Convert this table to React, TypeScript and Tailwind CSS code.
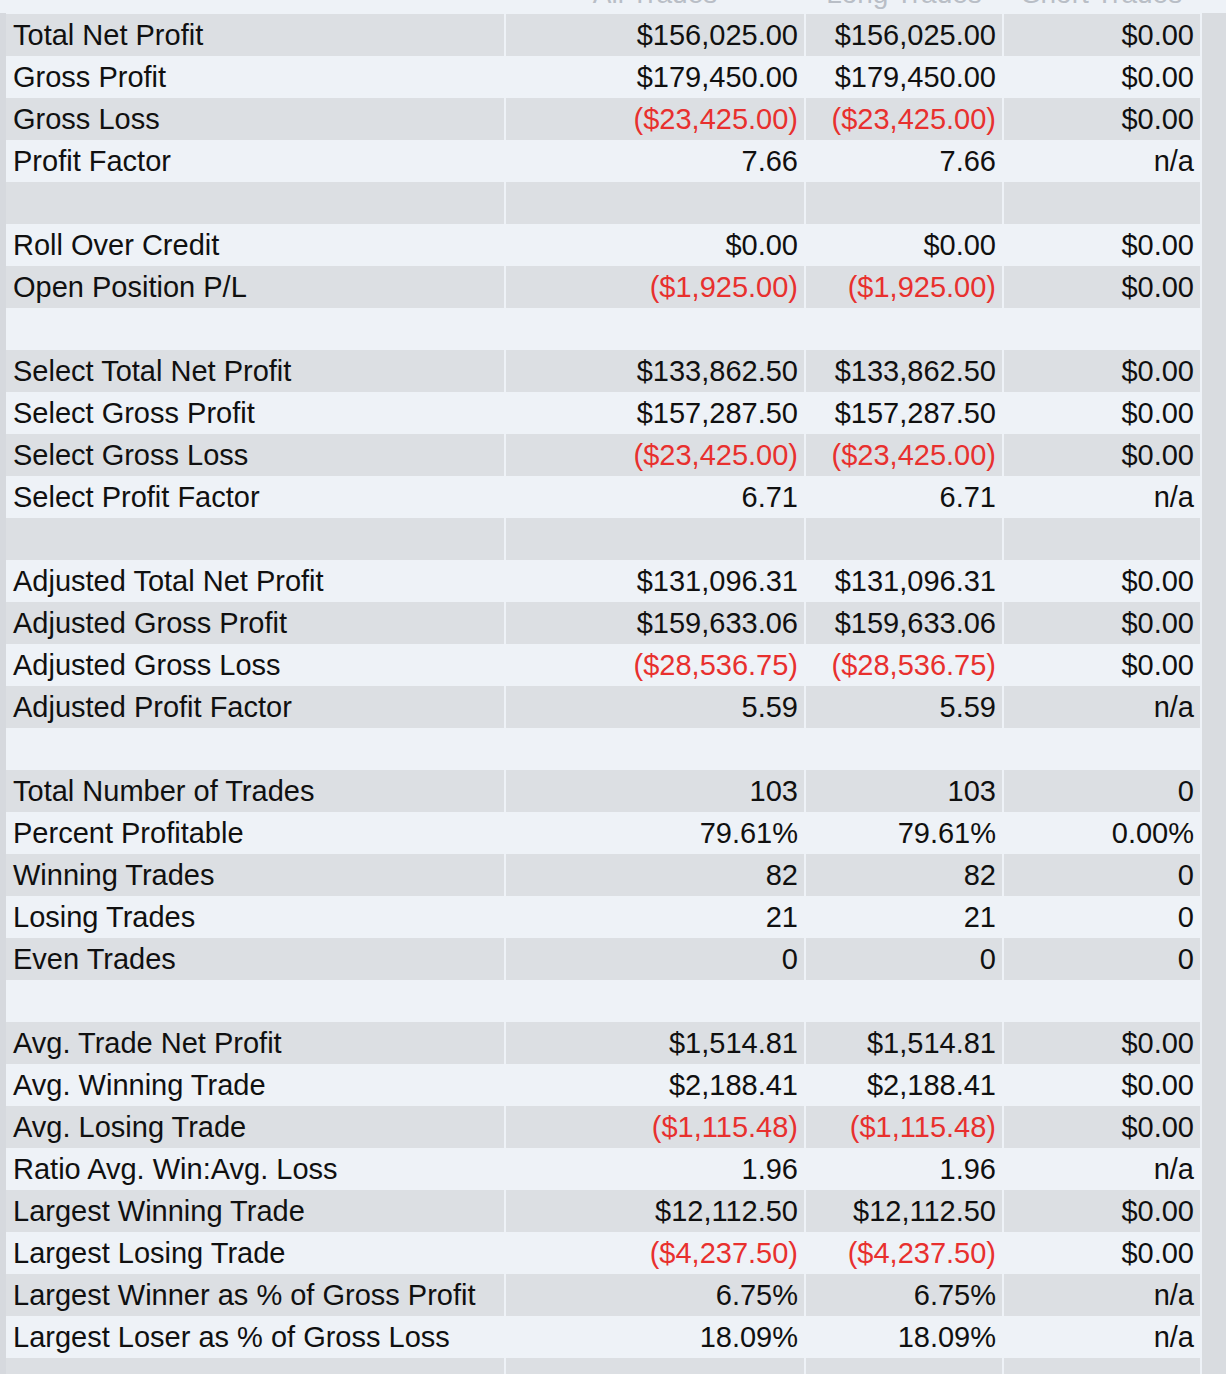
import React from "react";

type Row = { label: string; all: string; long: string; short: string } | null;

const rows: Row[] = [
  { label: "Total Net Profit", all: "$156,025.00", long: "$156,025.00", short: "$0.00" },
  { label: "Gross Profit", all: "$179,450.00", long: "$179,450.00", short: "$0.00" },
  { label: "Gross Loss", all: "($23,425.00)", long: "($23,425.00)", short: "$0.00" },
  { label: "Profit Factor", all: "7.66", long: "7.66", short: "n/a" },
  null,
  { label: "Roll Over Credit", all: "$0.00", long: "$0.00", short: "$0.00" },
  { label: "Open Position P/L", all: "($1,925.00)", long: "($1,925.00)", short: "$0.00" },
  null,
  { label: "Select Total Net Profit", all: "$133,862.50", long: "$133,862.50", short: "$0.00" },
  { label: "Select Gross Profit", all: "$157,287.50", long: "$157,287.50", short: "$0.00" },
  { label: "Select Gross Loss", all: "($23,425.00)", long: "($23,425.00)", short: "$0.00" },
  { label: "Select Profit Factor", all: "6.71", long: "6.71", short: "n/a" },
  null,
  { label: "Adjusted Total Net Profit", all: "$131,096.31", long: "$131,096.31", short: "$0.00" },
  { label: "Adjusted Gross Profit", all: "$159,633.06", long: "$159,633.06", short: "$0.00" },
  { label: "Adjusted Gross Loss", all: "($28,536.75)", long: "($28,536.75)", short: "$0.00" },
  { label: "Adjusted Profit Factor", all: "5.59", long: "5.59", short: "n/a" },
  null,
  { label: "Total Number of Trades", all: "103", long: "103", short: "0" },
  { label: "Percent Profitable", all: "79.61%", long: "79.61%", short: "0.00%" },
  { label: "Winning Trades", all: "82", long: "82", short: "0" },
  { label: "Losing Trades", all: "21", long: "21", short: "0" },
  { label: "Even Trades", all: "0", long: "0", short: "0" },
  null,
  { label: "Avg. Trade Net Profit", all: "$1,514.81", long: "$1,514.81", short: "$0.00" },
  { label: "Avg. Winning Trade", all: "$2,188.41", long: "$2,188.41", short: "$0.00" },
  { label: "Avg. Losing Trade", all: "($1,115.48)", long: "($1,115.48)", short: "$0.00" },
  { label: "Ratio Avg. Win:Avg. Loss", all: "1.96", long: "1.96", short: "n/a" },
  { label: "Largest Winning Trade", all: "$12,112.50", long: "$12,112.50", short: "$0.00" },
  { label: "Largest Losing Trade", all: "($4,237.50)", long: "($4,237.50)", short: "$0.00" },
  { label: "Largest Winner as % of Gross Profit", all: "6.75%", long: "6.75%", short: "n/a" },
  { label: "Largest Loser as % of Gross Loss", all: "18.09%", long: "18.09%", short: "n/a" },
  null,
];

const valColor = (v: string) => (v.startsWith("(") ? "text-[#e8302e]" : "text-[#101010]");

export default function App() {
  return (
    <div
      className="w-[1226px] h-[1374px] overflow-hidden bg-[#eef2f7] text-[29px] leading-none"
      style={{ fontFamily: '"Liberation Sans", Arial, sans-serif' }}
    >
      {/* header, mostly scrolled out of view */}
      <div className="h-[13px] overflow-hidden">
        <div className="mt-[-27px] ml-[6px] grid grid-cols-[498px_298px_196px_196px] gap-x-[2px] h-[42px] items-center text-[#b9bec6] text-[28px]">
          <div></div>
          <div className="text-center">All Trades</div>
          <div className="text-center">Long Trades</div>
          <div className="text-center">Short Trades</div>
        </div>
      </div>
      <div className="flex">
        <div className="w-[6px] h-[1400px] bg-[#d6d9de] shrink-0"></div>
        <div className="w-[1194px] shrink-0 pt-[1px]">
          {rows.map((r, i) => {
            const dark = i % 2 === 0;
            const cell = dark ? "bg-[#dcdfe3]" : "bg-[#eef2f7]";
            return (
              <div key={i} className="grid grid-cols-[498px_298px_196px_196px] gap-x-[2px] h-[42px]">
                <div className={`${cell} flex items-center pl-[7px] text-[#101010]`}>{r ? r.label : ""}</div>
                <div className={`${cell} flex items-center justify-end pr-[6px] ${r ? valColor(r.all) : ""}`}>{r ? r.all : ""}</div>
                <div className={`${cell} flex items-center justify-end pr-[6px] ${r ? valColor(r.long) : ""}`}>{r ? r.long : ""}</div>
                <div className={`${cell} flex items-center justify-end pr-[6px] ${r ? valColor(r.short) : ""}`}>{r ? r.short : ""}</div>
              </div>
            );
          })}
        </div>
        <div className="w-[2px] shrink-0"></div>
        <div className="w-[24px] h-[1400px] bg-[#d9dce0] shrink-0"></div>
      </div>
    </div>
  );
}
